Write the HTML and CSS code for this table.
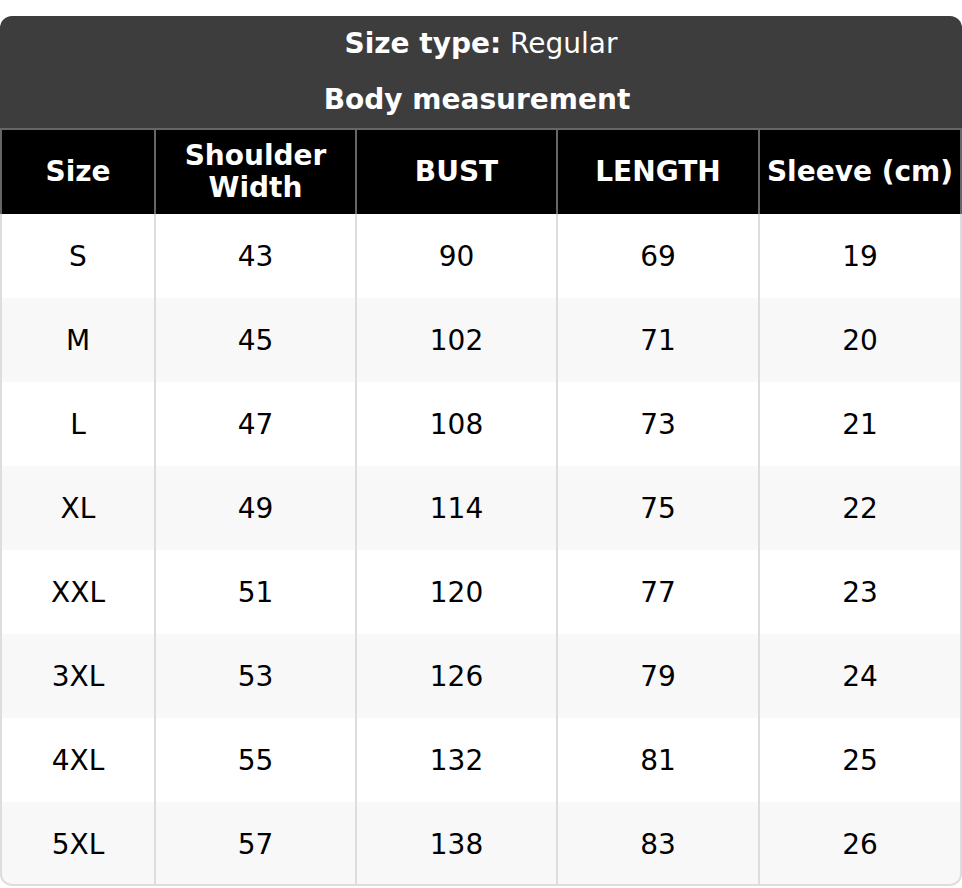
FILE: index.html
```html
<!DOCTYPE html>
<html>
<head>
<meta charset="utf-8">
<link rel="stylesheet" href="styles.css">
</head>
<body>
<div class="card">
  <div class="top">
    <div class="top-line"><b>Size type:</b> Regular</div>
    <div class="top-line shifted"><b>Body measurement</b></div>
  </div>
  <table class="chart">
    <colgroup>
      <col class="c1"><col class="c2"><col class="c3"><col class="c4"><col class="c5">
    </colgroup>
    <thead>
      <tr><th>Size</th><th>Shoulder<br>Width</th><th>BUST</th><th>LENGTH</th><th>Sleeve (cm)</th></tr>
    </thead>
    <tbody>
      <tr><td>S</td><td>43</td><td>90</td><td>69</td><td>19</td></tr>
      <tr><td>M</td><td>45</td><td>102</td><td>71</td><td>20</td></tr>
      <tr><td>L</td><td>47</td><td>108</td><td>73</td><td>21</td></tr>
      <tr><td>XL</td><td>49</td><td>114</td><td>75</td><td>22</td></tr>
      <tr><td>XXL</td><td>51</td><td>120</td><td>77</td><td>23</td></tr>
      <tr><td>3XL</td><td>53</td><td>126</td><td>79</td><td>24</td></tr>
      <tr><td>4XL</td><td>55</td><td>132</td><td>81</td><td>25</td></tr>
      <tr><td>5XL</td><td>57</td><td>138</td><td>83</td><td>26</td></tr>
    </tbody>
  </table>
</div>
</body>
</html>
```
FILE: styles.css
```css
html, body {
  margin: 0;
  padding: 0;
  background: #fff;
}
body {
  padding-top: 16px;
  font-family: "DejaVu Sans", sans-serif;
}
.card {
  position: relative;
  width: 962px;
  border-radius: 12px;
  overflow: hidden;
}
.card::after {
  content: "";
  position: absolute;
  left: 0;
  right: 0;
  top: 198px;
  bottom: 0;
  border: 2px solid #dddddd;
  border-top: none;
  border-radius: 0 0 12px 12px;
  pointer-events: none;
}
.top {
  background: #3d3d3d;
  color: #fff;
  text-align: center;
  font-size: 28px;
}
.top-line {
  height: 56px;
  line-height: 56px;
}
.top-line.shifted {
  padding-right: 8px;
}
.chart {
  width: 100%;
  border-collapse: collapse;
  table-layout: fixed;
  font-size: 28px;
}
.c1 { width: 154px; }
.c2 { width: 201px; }
.c3 { width: 201px; }
.c4 { width: 202px; }
.c5 { width: auto; }
.chart th {
  background: #000;
  color: #fff;
  font-weight: bold;
  height: 84px;
  line-height: 32px;
  padding: 0;
  border: 2px solid #666;
  border-bottom: none;
}
.chart td {
  height: 84px;
  padding: 0;
  text-align: center;
  color: #000;
  border-left: 2px solid #dddddd;
  border-right: 2px solid #dddddd;
}
.chart tbody tr:nth-child(even) td {
  background: #f8f8f8;
}
```
